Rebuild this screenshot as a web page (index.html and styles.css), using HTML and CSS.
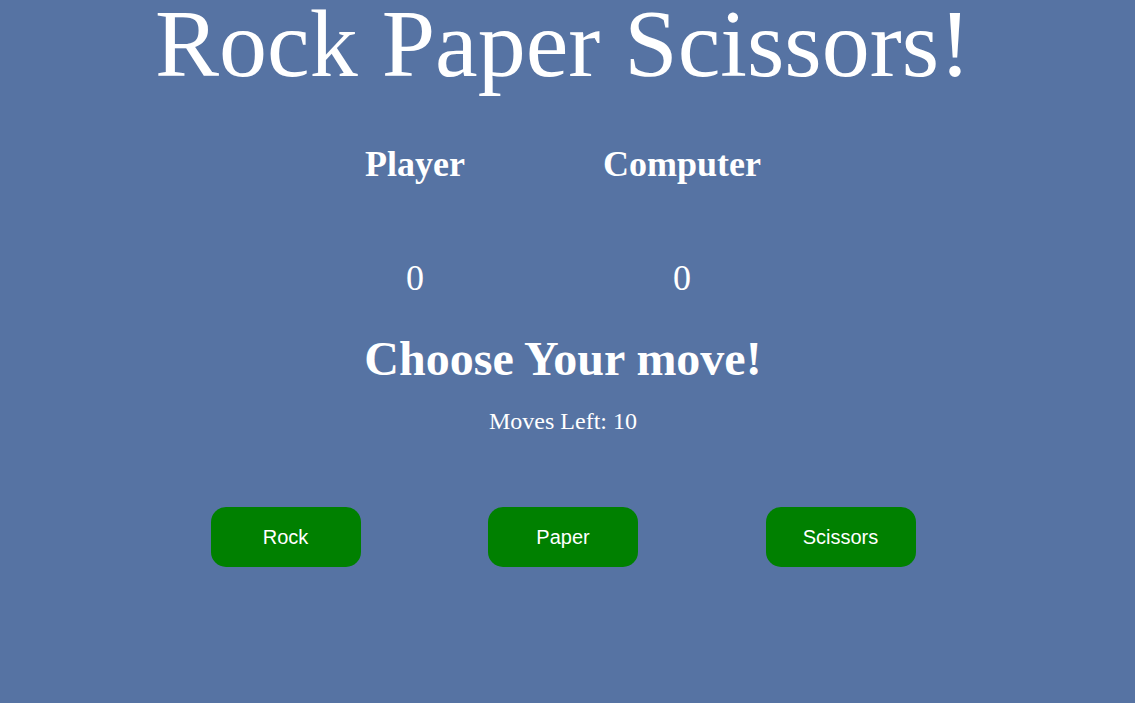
FILE: index.html
```html
<!DOCTYPE html>
<html lang="en">
<head>
<meta charset="utf-8">
<title>Rock Paper Scissors!</title>
<link rel="stylesheet" href="styles.css">
</head>
<body>
<main class="game">
  <h1 class="title">Rock Paper Scissors!</h1>
  <section class="scores">
    <div class="score-col">
      <h2 class="score-label">Player</h2>
      <p class="score-value">0</p>
    </div>
    <div class="score-col">
      <h2 class="score-label">Computer</h2>
      <p class="score-value">0</p>
    </div>
  </section>
  <h2 class="prompt">Choose Your move!</h2>
  <p class="moves-left">Moves Left: 10</p>
  <div class="choices">
    <button class="choice">Rock</button>
    <button class="choice">Paper</button>
    <button class="choice">Scissors</button>
  </div>
</main>
</body>
</html>
```
FILE: styles.css
```css
html, body {
  margin: 0;
  padding: 0;
}
body {
  background: #5673a3;
  color: #ffffff;
  font-family: "Liberation Serif", "Times New Roman", serif;
  height: 703px;
  overflow: hidden;
}
.game {
  display: flex;
  flex-direction: column;
  align-items: center;
  padding-right: 9px;
  text-align: center;
}
.title {
  margin: 0;
  font-size: 96px;
  font-weight: normal;
  line-height: 88px;
}
.scores {
  display: flex;
  justify-content: center;
  gap: 138px;
  margin-top: 58px;
}
.score-col {
  display: flex;
  flex-direction: column;
  align-items: center;
}
.score-label {
  margin: 0;
  font-size: 36px;
  font-weight: bold;
  line-height: 1;
}
.score-value {
  margin: 78px 0 0;
  font-size: 36px;
  line-height: 1;
}
.prompt {
  margin: 39px 0 0;
  font-size: 48px;
  font-weight: bold;
  line-height: 1;
}
.moves-left {
  margin: 26px 0 0;
  font-size: 24px;
  line-height: 1;
}
.choices {
  display: flex;
  justify-content: space-evenly;
  width: 960px;
  margin-top: 74px;
}
.choice {
  width: 150px;
  height: 60px;
  border: none;
  border-radius: 15px;
  background: #008000;
  color: #ffffff;
  font-family: "Liberation Sans", Arial, sans-serif;
  font-size: 20px;
  padding: 0;
  cursor: pointer;
}
```
